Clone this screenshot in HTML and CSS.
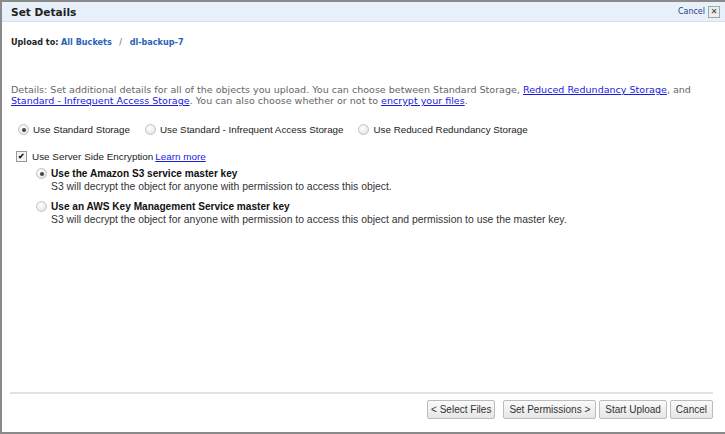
FILE: index.html
```html
<!doctype html>
<html>
<head>
<link rel="stylesheet" href="styles.css">
</head>
<body>
<div class="dialog">
  <div class="titlebar">
    <span class="title">Set Details</span>
    <a class="close" href="#">Cancel <span class="xbox">&#x2715;</span></a>
  </div>

  <div class="content">
    <div class="crumbs">
      <b>Upload to:</b> <a href="#">All Buckets</a> <span class="sep">/</span> <a href="#">dl-backup-7</a>
    </div>

    <p class="details">Details: Set additional details for all of the objects you upload. You can choose between Standard Storage, <a href="#">Reduced Redundancy Storage</a>, and <a href="#">Standard - Infrequent Access Storage</a>. You can also choose whether or not to <a href="#">encrypt your files</a>.</p>

    <div class="storage">
      <label><span class="radio on"></span>Use Standard Storage</label>
      <label><span class="radio"></span>Use Standard - Infrequent Access Storage</label>
      <label><span class="radio"></span>Use Reduced Redundancy Storage</label>
    </div>

    <label class="sse"><span class="check">&#x2714;</span>Use Server Side Encryption <a href="#">Learn more</a></label>

    <div class="keys">
      <div class="key">
        <span class="radio on"></span>
        <div>
          <b>Use the Amazon S3 service master key</b>
          <div class="desc">S3 will decrypt the object for anyone with permission to access this object.</div>
        </div>
      </div>
      <div class="key">
        <span class="radio"></span>
        <div>
          <b>Use an AWS Key Management Service master key</b>
          <div class="desc">S3 will decrypt the object for anyone with permission to access this object and permission to use the master key.</div>
        </div>
      </div>
    </div>
  </div>

  <div class="footer">
    <button class="back">&lt; Select Files</button>
    <button class="wide">Set Permissions &gt;</button>
    <button class="tight">Start Upload</button>
    <button class="tight">Cancel</button>
  </div>
</div>
</body>
</html>
```

FILE: styles.css
```css
html, body { margin: 0; padding: 0; background: #fff; }
body { font-family: "DejaVu Sans", Verdana, sans-serif; }

.dialog {
  height: 434px; box-sizing: border-box;
  border-left: 2px solid #8a8a8a; border-top: 2px solid #8a8a8a; border-bottom: 2px solid #8a8a8a;
  display: flex; flex-direction: column;
}

.titlebar {
  height: 19px; background: #e8f0fa; border-bottom: 1px solid #d7e1ee;
  display: flex; align-items: center; justify-content: space-between; padding: 0 5px 0 9px;
}
.title { font-size: 10.6px; font-weight: bold; color: #222; }
.close { font-size: 8px; color: #1f3f8f; text-decoration: none; display: flex; align-items: center; gap: 3px; }
.xbox {
  display: inline-block; width: 10px; height: 10px; border: 1px solid #9aa; background: #eee;
  font-size: 8px; line-height: 10px; text-align: center; color: #333;
}

.content { flex: 1; padding: 0 0 0 9px; }

.crumbs { font-size: 8.1px; color: #222; margin-top: 15px; }
.crumbs a { color: #2a62b8; font-weight: bold; text-decoration: none; }
.crumbs .sep { color: #666; margin: 0 5px; }

.details { font-size: 9.55px; line-height: 11px; color: #666; margin: 37px 0 0; padding-right: 20px; }
.details a, .sse a { color: #1a1ae0; }

.storage { display: flex; gap: 15px; margin-top: 18px; padding-left: 7px; font-family: "Liberation Sans", Arial, sans-serif; font-size: 9.8px; color: #222; }
.storage label { display: flex; align-items: center; }

.radio {
  display: inline-block; width: 9px; height: 9px; border-radius: 50%; flex: none;
  border: 1px solid #c2c2c2; background: radial-gradient(circle at 40% 35%, #fff, #dedede);
  margin-right: 4px; position: relative;
}
.radio.on::after {
  content: ""; position: absolute; left: 2.5px; top: 2.5px; width: 4px; height: 4px; border-radius: 50%; background: #444;
}

.sse { display: flex; align-items: center; margin-top: 16px; padding-left: 5px; font-family: "Liberation Sans", Arial, sans-serif; font-size: 9.9px; color: #222; }
.sse a { margin-left: 2px; }
.check {
  display: inline-block; width: 9px; height: 9px; border: 1px solid #999; background: #f4f4f4;
  font-size: 8px; font-weight: bold; line-height: 9px; text-align: center; color: #111; margin-right: 5px;
}

.keys { padding-left: 25px; margin-top: 6px; font-family: "Liberation Sans", Arial, sans-serif; font-size: 10px; color: #222; }
.key { display: flex; align-items: flex-start; margin-bottom: 8px; }
.key .radio { margin-top: 0; margin-right: 4px; }
.key b { display: block; font-size: 10.1px; line-height: 12px; color: #111; }
.desc { font-size: 10.4px; line-height: 12px; margin-top: 1px; color: #333; }

.footer {
  margin: 0 12px 13px 8px; border-top: 2px solid #e2e2e2; padding-top: 6px;
  display: flex; justify-content: flex-end; gap: 5px;
}
.footer button {
  font-family: "Liberation Sans", Arial, sans-serif; font-size: 10px; color: #333;
  background: linear-gradient(#fafafa, #e6e6e6); border: 1px solid #bcbcbc; border-radius: 2px;
  height: 19px; padding: 0 5px; margin: 0;
}
.footer .back { padding: 0 3px; }
.footer .wide { margin-left: 3px; }
.footer .tight { margin-left: -2px; }
```
